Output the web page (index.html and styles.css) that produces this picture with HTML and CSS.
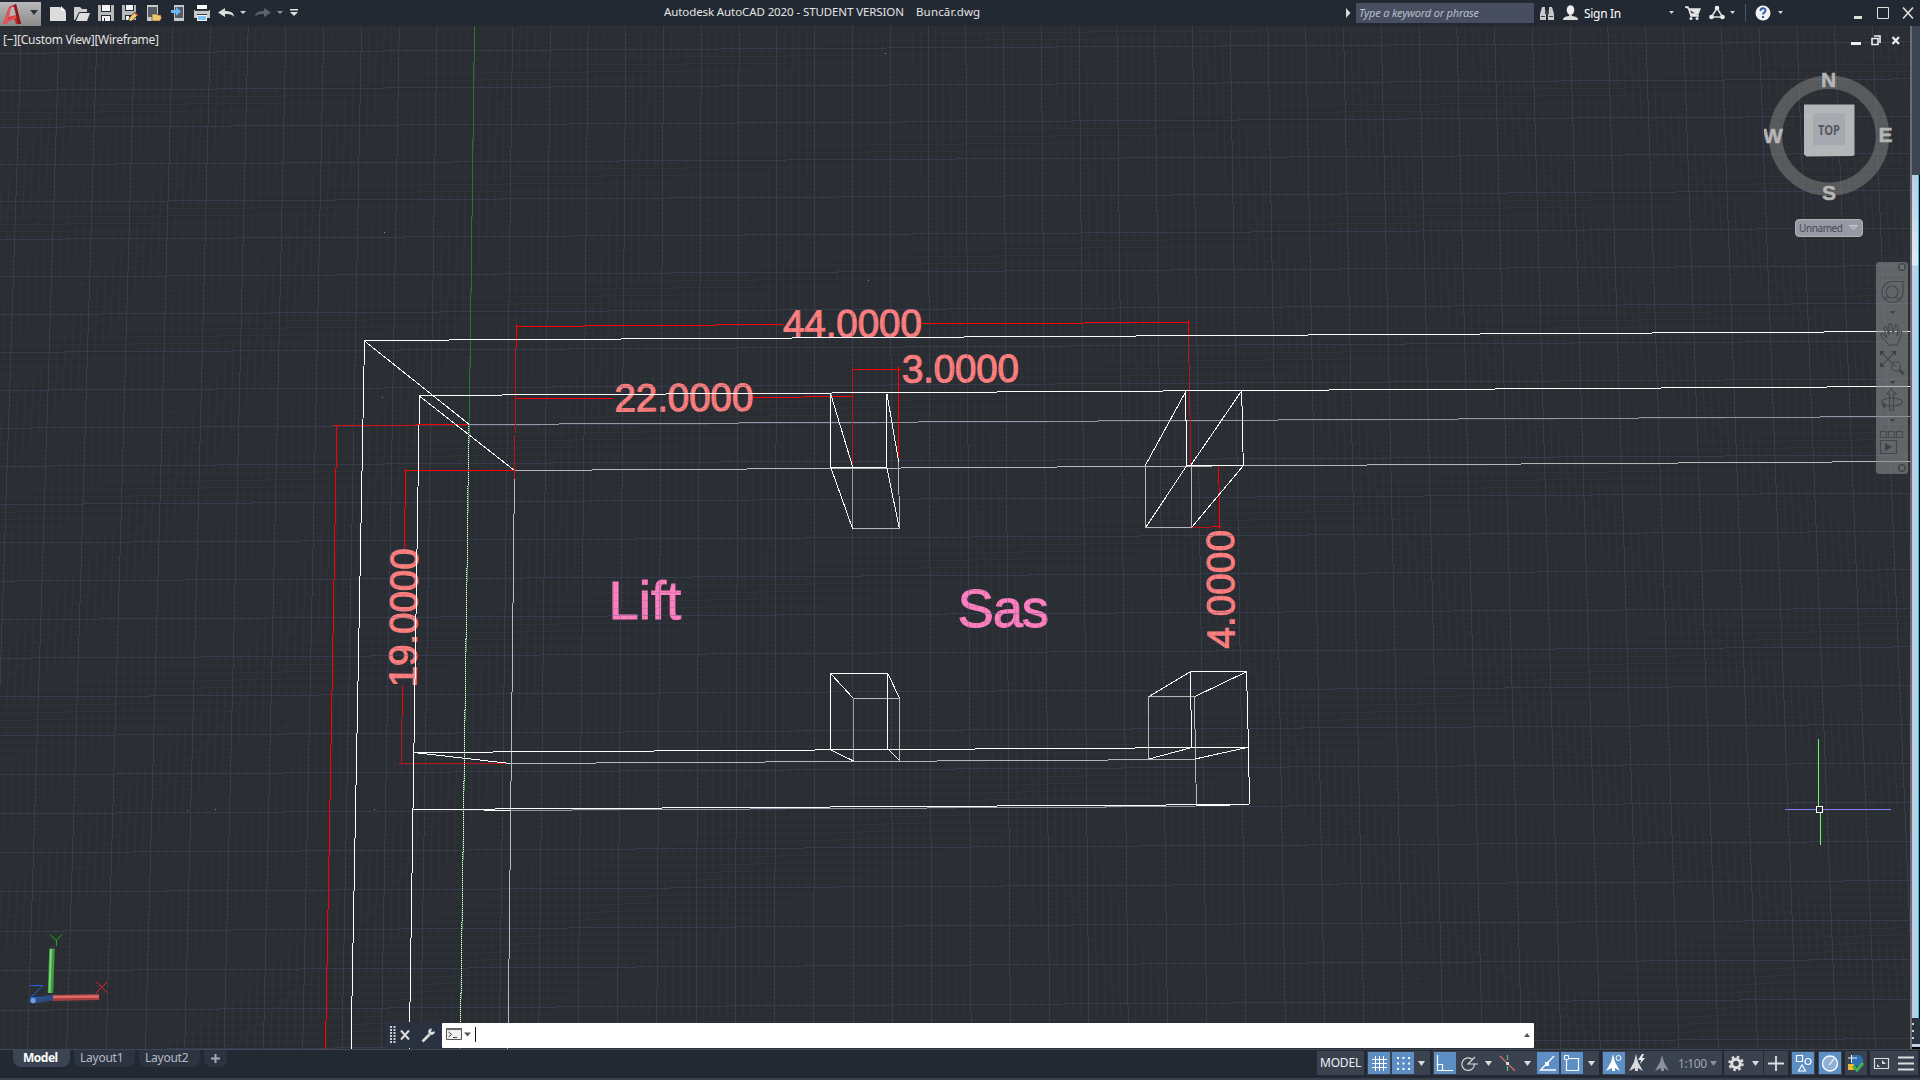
FILE: index.html
```
<!DOCTYPE html>
<html lang="en">
<head>
<meta charset="utf-8">
<title>Autodesk AutoCAD 2020</title>
<link rel="stylesheet" href="styles.css">
</head>
<body>
<header class="titlebar">
  <button class="app-button">
    <svg width="41" height="24" viewBox="0 0 41 24"><path d="M3 22 9 5l7-3 5 20h-5l-2-6-6 1-1 5z" fill="#c4272d"/><path d="M3 22 9 5l2 1-4 16z" fill="#e4565a"/><path d="M11 5l3 0 2 8-7 2z" fill="#b8b4b4"/><path d="M8 17l8-4 1 3-10 4z" fill="#e6484c"/><path d="M14 3l2-1 5 20h-3z" fill="#8e171c"/><path d="M30 8h8l-4 5z" fill="#2d3442"/></svg>
  </button>
  <nav class="quick">
    <svg width="16" height="16"><path d="M0 2h10l6 5v9H0z" fill="#dcdcdc"/><path d="M11 1l5 5h-5z" fill="#f6f6f6"/></svg>
    <svg width="16" height="16"><path d="M0 15V2h6l2 2h5v3H5L1 15z" fill="#cfcfcf"/><path d="M5.500 8H16l-3 8H2z" fill="#dedede"/></svg>
    <svg width="16" height="16"><path d="M0 0h16v16H0z" fill="#b9b9b9"/><path d="M3 0h10v7H3z" fill="#222933"/><path d="M4 0h8v6H4z" fill="#f5f5f5"/><path d="M3 10h10v6H3z" fill="#222933"/><path d="M4 11h8v5H4z" fill="#f5f5f5"/><path d="M6 13h1v3H6z" fill="#222933"/></svg>
    <svg width="16" height="16"><path d="M0 0h14v15H0z" fill="#b9b9b9"/><path d="M3 0h9v6H3z" fill="#222933"/><path d="M4 0h7v5H4z" fill="#f5f5f5"/><path d="M3 10h8v5H3z" fill="#222933"/><path d="M4 11h3v4H4z" fill="#f5f5f5"/><path d="M7 16v-3l6-6 3 3-6 6z" fill="#f3c775" stroke="#222933" stroke-width=".7"/><path d="M13 7l3 3-1 1-3-3z" fill="#d64a43"/></svg>
    <svg width="16" height="16"><path d="M1 0h11v16H1z" fill="#c8c8c8"/><path d="M2 2h9v10H2z" fill="#555b64"/><path d="M6 16V9h4l1 1h4v2l1 0-2 4z" fill="#f2c56c" stroke="#3b3424" stroke-width=".5"/></svg>
    <svg width="16" height="16"><path d="M4 0h10v16H4z" fill="#c8c8c8"/><path d="M5 2h8v11H5z" fill="#555b64"/><path d="M1 5h5V2l5 4.500L6 11V8H1z" fill="#67b9f5"/></svg>
    <svg width="16" height="16"><path d="M3 0h10v4H3z" fill="#fff"/><path d="M0 5h16v8H0z" fill="#c9c9c9"/><path d="M1 5h14v1H1zM3 9h10v1H3z" fill="#343a44"/><path d="M3 10h10v6H3z" fill="#f4f4f4"/><path d="M4 11h8v4H4z" fill="#7ec3f2"/></svg>
    <svg width="16" height="16"><path d="M0 7.500 7 3v3c6 0 9 2 9 6-2-3-5-3-9-3v3z" fill="#dcdcdc"/></svg>
    <svg class="near" width="8" height="16"><path d="M0 6h6L3 9z" fill="#d5d5d5"/></svg>
    <svg width="16" height="16"><path d="M16 7.500 9 3v3C3 6 0 8 0 12c2-3 5-3 9-3v3z" fill="#5b626d"/></svg>
    <svg class="near" width="8" height="16"><path d="M0 6h6L3 9z" fill="#8b9099"/></svg>
    <svg class="more" width="10" height="16"><path d="M0 4h8v1.500H0zM0 7h8l-4 4z" fill="#e0e0e0"/></svg>
  </nav>
  <div class="title"><span class="product">Autodesk AutoCAD 2020 - STUDENT VERSION</span><span class="file">Buncăr.dwg</span></div>
  <svg class="expand" width="6" height="10"><path d="M0 0l4.500 5L0 10z" fill="#d8d8d8"/></svg>
  <div class="search">Type a keyword or phrase</div>
  <div class="account">
    <svg width="14" height="16"><path d="M2 2h3v3l1 2v8H0V9zM9 2h3l2 7v6H8V7l1-2z" fill="#c9c9c9"/><path d="M5 6h4v3H5zM1 11h4v1H1zM9 11h4v1H9z" fill="#3b414b"/></svg>
    <svg class="person" width="15" height="16"><ellipse cx="7.500" cy="5" rx="3.800" ry="4.800" fill="#eee"/><path d="M6 9h3v3h-3z" fill="#c9c9c9"/><path d="M0 15c0-3 3-4 7.500-4s7.500 1 7.500 4z" fill="#ddd"/></svg>
    <span class="sign">Sign In</span>
    <svg class="drop" width="6" height="4"><path d="M0 0h5L2.500 3z" fill="#d5d5d5"/></svg>
    <svg class="cart" width="16" height="16"><path d="M0 2h3l3 9h8M4 4h11l-2 5H6z" fill="#e6e6e6" stroke="#e6e6e6" stroke-width="1.300"/><circle cx="6" cy="13.500" r="1.500" fill="#e6e6e6"/><circle cx="12" cy="13.500" r="1.500" fill="#e6e6e6"/></svg>
    <svg class="share" width="16" height="16"><path d="M8 3 2.500 12h11z" fill="none" stroke="#dcdcdc" stroke-width="1.600"/><circle cx="8" cy="3" r="2.300" fill="#eee"/><circle cx="2.500" cy="12" r="2.300" fill="#eee"/><circle cx="13.500" cy="12" r="2.300" fill="#eee"/></svg>
    <svg class="drop2" width="6" height="4"><path d="M0 0h5L2.500 3z" fill="#d5d5d5"/></svg>
    <i class="sep"></i>
    <svg class="help" width="16" height="16"><circle cx="8" cy="8" r="7.500" fill="#f2f2f2"/><path d="M5.500 6c0-3.500 5-3.500 5-.5 0 2-2.500 2-2.500 4" fill="none" stroke="#2d5ba6" stroke-width="1.900"/><path d="M7 11h2v2H7z" fill="#2d5ba6"/></svg>
    <svg class="drop3" width="6" height="4"><path d="M0 0h5L2.500 3z" fill="#d5d5d5"/></svg>
  </div>
  <div class="window-controls">
    <svg width="8" height="14"><path d="M0 10h8v3H0z" fill="#e0ded8"/></svg>
    <svg width="12" height="14"><path d="M.5 1.500h11v11H.5z" fill="none" stroke="#e0ded8"/></svg>
    <svg width="12" height="14"><path d="M1 1.500l10 11M11 1.500l-10 11" stroke="#e0ded8" stroke-width="1.600"/></svg>
  </div>
</header>

<main class="workspace">
  <section class="viewport">
    <svg class="drawing" width="1911" height="1023" viewBox="0 26 1911 1023">
      <g class="dim-text">
        <text x="783" y="337.500" textLength="139" transform="rotate(-.4 782 337)">44.0000</text>
        <text x="902" y="382.500" textLength="117" transform="rotate(-.4 901 382)">3.0000</text>
        <text x="614.500" y="411.500" textLength="139" transform="rotate(-.4 613 411)">22.0000</text>
        <text transform="translate(416 687.500) rotate(-89.300)" textLength="139">19.0000</text>
        <text transform="translate(1234.500 648.500) rotate(-90.400)" textLength="118.500">4.0000</text>
      </g>
      <g class="room-text">
        <text x="608.500" y="618.500">Lift</text>
        <text x="957.500" y="627" textLength="91.500">Sas</text>
      </g>
      <path id="minor" class="grid-minor"/>
      <path id="major" class="grid-major"/>
      <g class="crisp">
        <path class="axis" d="M474.500 26L469.300 424"/>
        <path class="axis lit" d="M469.300 424L460.300 1049"/>
        <path class="axis-dash" d="M468.500 424V486M467.500 486V568M466.500 568V639M465.500 639V710M464.500 710V781M463.500 781V852M462.500 852V922M461.500 922V993M460.500 993V1049"/>
        <path class="far" d="M469 424.500L1911 416.500M852.500 467V529M853.500 698V761M485 810.500L1195 806.500"/>
        <path class="mid" d="M514.500 470.500L1911 461.500M514.500 471L508 1049M852.500 529L899.500 528.500L898.500 460M1145 466L1145.700 527.500H1191.700L1191 465M853.500 698.500H899.500V761M510 763.500L1195 759.500M1148.500 759V696.700H1194.500L1195.500 760L1196.500 805"/>
        <path class="red" d="M516.500 326.500L783 324.500M921 323.800L1188.500 322.500M516.500 324V348M516 398.500H613M753 397.500L852.500 396.500M852.500 369.500H901M898.700 366V460M415 424.500H469M336.800 425L325.500 1049M404 470.500H514.500M405.500 471L404.500 548M402.500 686L402 719M1218.700 466L1219.700 530M1212 526.500H1221M516.500 326.500v3M1188 320V338M1218.500 466.500v14"/>
        <path class="red-mid" d="M333 425.500H415"/>
        <path class="red-dark" d="M516 348L514.500 479M852.500 367V467M1188.500 338L1191 465M402 719L401.300 763M399 763.500H510M1192 527.500L1212 527"/>
        <path class="near-line" d="M1911 331.500L364.500 340.500L351 1049M1911 386.500L419.500 395.500L417.300 530L409.300 1049M364.500 341L469.300 424.500M420 396.500L514.500 470.500"/>
        <path class="near-line" d="M830.500 394V467.500H886.500V394M831 395L852.700 467M887 394L898.700 462M831 468L852.700 529M887 468L899.300 528.500"/>
        <path class="near-line" d="M1185.700 391.500L1186.500 465.500H1243.300L1241.700 391M1185.500 392L1145 466M1241.500 391L1191 465M1186.500 466L1146 527M1243 466L1192 527"/>
        <path class="near-line" d="M830.500 749V673.500H887.500V749M831 674L853.500 698.500M888 674L899.500 698M831 750L853.500 761M888 749L899.500 760.500"/>
        <path class="near-line" d="M1191.500 747.500L1190.500 671.500H1246.500L1248.500 747L1249.500 804.500M1190 672L1149 696.500M1246 672L1195 696.500M1149 759L1190 748M1195 759L1247 747.500"/>
        <path class="near-line" d="M413.700 752.500L1248.500 747.300M414 752.500L510 763.500M412.500 809.500L1249.500 804.500M484 810.500H510M1196 805.500H1230"/>
        <path class="specks" d="M382 397.500h1M384 232.500h1M868 280.500h1M885 53.500h1M374 809.500h1M187 810.500h1M215 809.500h1"/>
        <g class="cursor">
          <path d="M1785 809.500H1891" stroke="#7f7cf2"/>
          <path d="M1818.500 739V806M1820.500 813V845" stroke="#70f764"/>
          <path d="M1816.500 806.500h6v6h-6z" fill="#2a2d31" stroke="#fff"/>
        </g>
      </g>
      <g class="ucs">
        <path d="M50.500 993L52 948.500" stroke="#3c9a41" stroke-width="5.500"/><path d="M49.500 993L51 949" stroke="#7fd47e" stroke-width="2"/>
        <path d="M52 998L99 997" stroke="#a33f3f" stroke-width="6"/><path d="M53 997L99 996.500" stroke="#dd6a68" stroke-width="2.500"/>
        <path d="M32 1001L53 997.500" stroke="#2c4c80" stroke-width="5.500"/><circle cx="33" cy="1000.500" r="2.800" fill="#6c9fe0"/>
        <path d="M50 934.500L56 940.500L62 934.500M56.500 940V946" stroke="#0fae18"/>
        <path d="M96 981.500L107.500 993M107.500 981.500L96 993" stroke="#e82525"/>
        <path d="M30 985.500H43L30.500 997.500H42.500" stroke="#1f5fe0"/>
      </g>
    </svg>
    <div class="view-label">[−][Custom View][Wireframe]</div>
    <div class="view-controls">
      <svg width="10" height="11"><path d="M0 7h10v3H0z" fill="#eee"/></svg>
      <svg width="10" height="11"><path d="M3 1h6v7M1 3.500h6v6H1z" fill="none" stroke="#eee" stroke-width="1.600"/></svg>
      <svg width="10" height="11"><path d="M1.500 2l6.500 7M8 2L1.500 9" stroke="#eee" stroke-width="2.200"/></svg>
    </div>
    <svg class="viewcube" width="130" height="180" viewBox="1764 66 130 180">
      <circle cx="1829" cy="135.700" r="53.500" fill="none" stroke="#858585" stroke-opacity=".5" stroke-width="13.500"/>
      <g class="compass"><text x="1828.500" y="87">N</text><text x="1773" y="142.500">W</text><text x="1885.500" y="142">E</text><text x="1829" y="199.500">S</text></g>
      <path d="M1804 104.500h50.500V155l-2 1-46 .5-2.500-2z" fill="#b5b6b8"/>
      <path d="M1813 113h32v32h-32z" fill="#a6a9af"/>
      <text class="cube-face" x="1829" y="134.500" textLength="22" lengthAdjust="spacingAndGlyphs">TOP</text>
      <rect x="1795.500" y="219.500" width="67" height="17" rx="3.500" fill="#9799a5" stroke="#aeb0b7"/>
      <text class="cube-name" x="1799" y="231.500" textLength="44">Unnamed</text>
      <path d="M1849.500 225.500h8l-4 4z" fill="#a5a7b2" stroke="#c8cad2"/>
    </svg>
    <svg class="navbar" width="34" height="214" viewBox="1875 261 34 214">
      <rect x="1876" y="262" width="32" height="212" rx="3" fill="#888b8c" fill-opacity=".6"/>
      <path d="M1876 277.500h32M1876 319h32M1876 388h32M1876 427h32" stroke="#55585b" stroke-opacity=".35"/>
      <g fill="none" stroke="#43474c" stroke-width="1.100">
        <circle cx="1902" cy="267" r="3.500" fill="#4a4d51"/><path d="M1900 265l4 4M1904 265l-4 4" stroke="#808386"/>
        <path d="M1892 281.500h11v10a10.500 10.500 0 1 1-11-10z"/><circle cx="1892" cy="292" r="6"/><path d="M1884 300l3.500-3.500M1899.500 300l-3-3"/>
        <path d="M1889 345l-8-9c-1-3 2-3 3-1l3 3-3-10c0-2 3-2 3 0l2 7v-10c0-2 3-2 3 0l1 9 2-8c1-2 3-1 3 1l-1 9 2-4c1-2 3-1 3 1l-3 8-2 4z"/>
        <path d="M1881 352l14 14M1895 352l-14 14"/><circle cx="1896" cy="366.500" r="4.500"/><path d="M1899 370l5 4" stroke-width="3"/>
        <ellipse cx="1892" cy="402" rx="10.500" ry="4"/><path d="M1889.500 410v-16h-2.500l4.500-5 4.500 5h-2.500v16z"/>
        <path d="M1880.500 431.500h6v6h-6zM1888.500 431.500h6v6h-6zM1896.500 431.500h6v6h-6zM1880.500 440.500h16v13h-16z"/>
        <circle cx="1902" cy="468" r="3.500" fill="#4a4d51"/><path d="M1900 467h4M1900 469h4" stroke="#808386"/>
      </g>
      <path d="M1889.500 311h6l-3 3zM1889.500 381h6l-3 3zM1889.500 419h6l-3 3zM1880 351h5l-5 5zM1896 351h-5l5 5zM1880 367h5l-5-5zM1885 402v7l-3-4zM1885 443l7 4-7 4z" fill="#3e4246"/>
    </svg>
    <div class="command">
      <div class="command-tools">
        <svg width="6" height="18"><path d="M1 0v18M4.500 0v18" stroke="#d0d0d0" stroke-width="2" stroke-dasharray="2 1"/></svg>
        <svg width="10" height="12"><path d="M1 1.500l8 9M9 1.500l-8 9" stroke="#dcdcdc" stroke-width="2"/></svg>
        <svg width="15" height="16"><path d="M1.500 14.500l7-7" stroke="#dcdcdc" stroke-width="2.600"/><path d="M13 4.500L10.500 5 10 4.500l1-3C7 1.500 6.500 5 8 7s6 1 6-2.500z" fill="#dcdcdc"/></svg>
      </div>
      <div class="command-input">
        <svg width="30" height="18"><path d="M.5 2.500h15v11H.5z" fill="#eee" stroke="#555"/><path d="M1 2h15v2H1z" fill="#666"/><path d="M2.500 6l3 2.500-3 2.500M7 11.500h4" fill="none" stroke="#444"/><path d="M18 6.500h7l-3.500 4z" fill="#555"/><path d="M29.500 1v15" stroke="#111"/></svg>
        <svg width="6" height="4"><path d="M0 4h6L3 0z" fill="#555"/></svg>
      </div>
    </div>
  </section>
  <aside class="edge"><div class="edge-top"></div><div class="edge-glow"></div><div class="edge-grip"><i></i><i></i><i></i></div><div class="edge-end"></div></aside>
</main>

<footer class="bottom">
  <div class="tabs">
    <div class="tab active">Model</div><div class="tab">Layout1</div><div class="tab second">Layout2</div><div class="tab add"><svg width="9" height="9"><path d="M4.500 0v9M0 4.500h9" stroke="#a6abb3" stroke-width="2"/></svg></div>
  </div>
  <div class="status">
    <div class="group g-model">MODEL</div>
    <div class="group g-grid">
      <svg class="on" width="22" height="22"><path d="M7.500 4v15M11.500 4v15M15.500 4v15M4 7.500h15M4 11.500h15M4 15.500h15" stroke="#fff"/></svg>
      <svg class="on" width="22" height="22"><path d="M5 6h13M5 11.500h13M5 17h13" stroke="#fff" stroke-width="2" stroke-dasharray="2 3.500"/></svg>
      <svg width="14" height="22"><path d="M2 9h7l-3.500 5z" fill="#dcdcdc"/></svg>
    </div>
    <div class="group g-ortho">
      <svg class="on" width="22" height="22"><path d="M3.500 3v15.500H19M3.500 12.500h5v6" fill="none" stroke="#fff" stroke-width="1.200"/></svg>
      <svg width="27" height="22"><path d="M16.500 7.500a6.300 6.300 0 1 0 2 4.500H12l7-7" fill="none" stroke="#d6d6d6" stroke-width="1.200"/><path d="M18 12h4" stroke="#d6d6d6"/></svg>
      <svg width="16" height="22"><path d="M2 9h7l-3.500 5z" fill="#dcdcdc"/></svg>
      <svg width="23" height="22"><path d="M1 4l15 15" stroke="#d86a70" stroke-width="1.200"/><path d="M8.500 3v5M8.500 14v5" stroke="#54c774" stroke-width="1.200"/><path d="M7 10h3v3H7z" fill="#ddd"/></svg>
      <svg width="15" height="22"><path d="M2 9h7l-3.500 5z" fill="#dcdcdc"/></svg>
      <svg class="on" width="22" height="22"><path d="M17 4L3.500 18H19" fill="none" stroke="#fff" stroke-width="1.300"/><path d="M8 10h4v4H8z" fill="#fff"/></svg>
      <svg class="on" width="22" height="22"><path d="M7 6.500h10.500v12h-12V8" fill="none" stroke="#fff" stroke-width="1.200"/><path d="M3.500 3.500h4v4h-4z" fill="#5e8fc4" stroke="#fff"/></svg>
      <svg width="16" height="22"><path d="M5 9h7l-3.500 5z" fill="#dcdcdc"/></svg>
    </div>
    <div class="group g-scale">
      <svg class="on" width="22" height="22"><path d="M10 2l2 8 5 9-5-3v3H9v-3l-6 3 5-9z" fill="#fff"/><circle cx="15.500" cy="6" r="2.500" fill="none" stroke="#fff"/></svg>
      <svg width="26" height="22"><path d="M11 2l2 8 5 9-5-3v3h-3v-3l-6 3 5-9z" fill="#d9d9d9"/><path d="M17 2l-4 6h3l-1 4 5-6h-3l2-4z" fill="#eee"/></svg>
      <svg width="26" height="22"><path d="M11 3l2 7 5 9-5-3v3H10v-3l-6 3 5-9z" fill="#8b919a"/></svg>
      <span class="scale">1:100</span>
      <svg width="12" height="22"><path d="M1 9h7l-3.500 5z" fill="#8b919a"/></svg>
    </div>
    <div class="group g-gear">
      <svg width="24" height="22"><circle cx="12" cy="11.500" r="4.300" fill="none" stroke="#ddd" stroke-width="3"/><circle cx="12" cy="11.500" r="6.500" fill="none" stroke="#ddd" stroke-width="2.500" stroke-dasharray="2.550 2.550"/></svg>
      <svg width="14" height="22"><path d="M4 9h7l-3.500 5z" fill="#dcdcdc"/></svg>
    </div>
    <div class="group g-plus"><svg width="24" height="22"><path d="M12 4v15M4 11.500h16" stroke="#e0e0e0" stroke-width="1.800"/></svg></div>
    <div class="group g-iso"><svg class="on" width="22" height="22"><path d="M4.500 3.500h6v6h-6zM6.500 19l3.500-6 3.500 6z" fill="none" stroke="#fff" stroke-width="1.200"/><circle cx="16" cy="9.500" r="3" fill="none" stroke="#fff" stroke-width="1.200"/></svg></div>
    <div class="group g-hw"><svg class="on" width="22" height="22"><circle cx="11" cy="11.500" r="7.500" fill="#8fb0d4" stroke="#fff" stroke-width="1.300"/><path d="M10 13l5-6" stroke="#fff" stroke-width="1.100"/></svg></div>
    <div class="group g-mon"><svg width="22" height="22"><path d="M7 3h8l3 4v7H7z" fill="#2e6fb4"/><path d="M3 6h9M6.500 3v8" stroke="#eee"/><path d="M3 12h6v6H3z" fill="#f2b72e"/><path d="M8 14l4 4 6-7" fill="none" stroke="#43b14d" stroke-width="3"/></svg></div>
    <div class="group g-end">
      <svg width="24" height="22"><path d="M4.500 6.500h14v10h-14z" fill="none" stroke="#ddd" stroke-width="1.200"/><path d="M12 12v-4l4 4zM7 15v-3l3 3z" fill="#ddd"/></svg>
      <svg width="24" height="22"><path d="M4 5.500h16M4 11.500h16M4 17.500h16" stroke="#ddd" stroke-width="1.800"/></svg>
    </div>
  </div>
</footer>
<script src="grid.js"></script>
</body>
</html>
```
FILE: grid.js
```
// Perspective floor grid: five minor cells per major cell.
let minor = '', major = '';
const xTop = i => 474.7 + 37.78 * i, xBottom = i => 460 + 39.32 * i;
for (let n = -70; n <= 205; n++) {
  const i = n / 5;
  const slope = (xBottom(i) - xTop(i)) / 1012;
  const seg = `M${(xTop(i) - slope * 9).toFixed(1)} 26L${(xBottom(i) + slope * 2).toFixed(1)} 1049`;
  if (n % 5 === 0) major += seg; else minor += seg;
}
for (let n = -5; n <= 140; n++) {
  const j = n / 5;
  const y = 51.3 + 36.97 * j + 0.0525 * j * j;
  const seg = `M0 ${(y + 1.97).toFixed(1)}L1911 ${(y - 9.4).toFixed(1)}`;
  if (n % 5 === 0) major += seg; else minor += seg;
}
document.getElementById('minor').setAttribute('d', minor);
document.getElementById('major').setAttribute('d', major);
```
FILE: styles.css
```
* { box-sizing: border-box; }
body { margin: 0; width: 1920px; height: 1080px; overflow: hidden; display: flex; flex-direction: column; background: #222933; color: #e4e4e4; font: 12px "Noto Sans", "Open Sans", sans-serif; }
svg { display: block; flex: none; }

.titlebar { height: 26px; flex: none; display: flex; align-items: center; background: #222933; }
.app-button { width: 41px; height: 24px; margin-top: 2px; padding: 0; border: 0; background: linear-gradient(#b9b9b9, #8a8a8a); }
.quick { display: flex; gap: 8px; margin-left: 9px; width: 260px; }
.quick .near { margin: 0 -1px 0 -2px; }
.quick .more { margin-left: -2px; }
.title { display: flex; margin-left: 354px; width: 682px; white-space: pre; font-size: 11.5px; line-height: 24px; height: 26px; }
.product { width: 252px; letter-spacing: -.1px; }
.file { letter-spacing: .15px; }
.expand { width: 6px; margin-right: 4px; }
.search { width: 178px; height: 20px; background: #464e60; color: #b9bec8; font: italic 11px/20px "Noto Sans", sans-serif; padding-left: 3px; letter-spacing: -.18px; }
.account { display: flex; align-items: center; margin-left: 6px; width: 314px; }
.person { margin-left: 9px; }
.sign { margin-left: 6px; width: 85px; font-size: 12px; letter-spacing: -.3px; color: #fff; }
.cart { margin-left: 10px; }
.share { margin-left: 8px; }
.drop2 { margin-left: 5px; }
.sep { width: 1px; height: 18px; margin-left: 9px; background: #4b5464; }
.help { margin-left: 9px; }
.drop3 { margin-left: 7px; }
.window-controls { display: flex; gap: 15px; }
.window-controls svg:last-child { margin-left: -2px; }

.workspace { height: 1023px; flex: none; display: flex; }
.viewport { position: relative; width: 1910px; overflow: hidden; background: #2a2d31; }
.drawing text { font-family: "Liberation Sans", Arial, sans-serif; }
.dim-text { font-size: 38.8px; fill: #ff7f7f; stroke: #ff7f7f; stroke-width: 1; }
.room-text { font-size: 54.5px; fill: #ff7fbf; stroke: #ff7fbf; stroke-width: 1; }
.grid-minor, .grid-major { fill: none; shape-rendering: crispEdges; }
.grid-minor { stroke: rgba(70, 75, 110, .17); }
.grid-major { stroke: rgba(80, 85, 130, .36); }
.crisp { shape-rendering: crispEdges; fill: none; }
.axis { stroke: #23762a; }
.axis.lit { stroke: #3f8a43; }
.axis-dash { stroke: #fff; stroke-dasharray: 1 1; }
.far { stroke: #9698a2; }
.mid { stroke: #b6b7ba; }
.near-line { stroke: #fff; }
.red { stroke: #ff0000; }
.red-mid { stroke: #d80f12; }
.red-dark { stroke: #bb1519; }
.specks { stroke: #d0666c; }
.ucs { fill: none; }
.view-label { position: absolute; left: 3px; top: 6px; font-size: 12px; line-height: 16px; letter-spacing: -.26px; color: #e2e2e2; }
.view-controls { position: absolute; right: 9px; top: 9px; display: flex; gap: 10px; }
.viewcube { position: absolute; left: 1764px; top: 40px; }
.viewcube text { text-anchor: middle; font-family: "Liberation Sans", Arial, sans-serif; }
.compass { font-size: 21px; font-weight: bold; fill: #b4b5b6; stroke: #b4b5b6; stroke-width: .5; }
.viewcube .cube-face { font: bold 14px "Noto Sans", sans-serif; fill: #565a62; }
.viewcube .cube-name { text-anchor: start; font: 10px "Noto Sans", sans-serif; fill: #464953; }
.navbar { position: absolute; left: 1875px; top: 235px; }
.command { position: absolute; left: 386px; bottom: 1px; width: 1148px; height: 26px; display: flex; align-items: center; }
.command-tools { width: 56px; height: 26px; display: flex; align-items: center; padding-left: 4px; gap: 4px; background: #2a3140; }
.command-tools svg:last-child { margin-left: 7px; }
.command-input { flex: 1; height: 25px; background: #fff; display: flex; align-items: center; justify-content: space-between; padding: 0 4px; border-radius: 1px; }
.edge { width: 10px; border-left: 2px solid #6e6e6e; display: flex; flex-direction: column; }
.edge-top { height: 149px; background: #3d4554; }
.edge-glow { height: 843px; border-right: 1px solid #000; box-shadow: inset -1px 0 #28bfe0; background: linear-gradient(#b6cdea 0, #dfe9f7 90px, #b9d0ec 91px, #b9d0ec 100%); }
.edge-grip { height: 26px; background: #2b3240; display: flex; flex-direction: column; align-items: flex-start; justify-content: space-evenly; }
.edge-grip i { width: 2px; height: 2px; background: #d0d0d0; }
.edge-end { height: 5px; background: #b9d0ec; border-bottom: 2px solid #000; }

.bottom { height: 31px; flex: none; display: flex; justify-content: space-between; border-top: 1px solid #3f4856; border-bottom: 2px solid #3a4250; }
.tabs { display: flex; padding-left: 13px; height: 17px; line-height: 16px; letter-spacing: -.25px; color: #b7bcc4; }
.tab { width: 61px; padding-left: 6px; background: #2c3441; border-radius: 0 0 8px 8px; margin-right: 4px; }
.tab.active { width: 57px; padding-left: 10px; font-weight: bold; color: #fff; background: #3b4453; letter-spacing: -.5px; }
.tab.second { width: 61px; }
.tab.add { width: 23px; padding: 4px 0 0 7px; margin-left: 0; }
.status { display: flex; width: 603px; padding-top: 1px; }
.group { height: 24px; display: flex; align-items: center; background: #3a4250; }
.on { background: #5e8fc4; }
.g-model { width: 47px; margin-right: 3px; justify-content: center; font-size: 12px; line-height: 22px; letter-spacing: -.2px; color: #f0f0f0; }
.g-grid { width: 63px; padding-left: 1px; gap: 2px; margin-right: 3px; }
.g-ortho { width: 166px; padding-left: 1px; margin-right: 3px; }
.g-ortho .on + .on { margin-left: 2px; }
.g-scale { width: 120px; padding-left: 1px; margin-right: 2px; }
.scale { width: 31px; margin-left: 1px; font-size: 12px; letter-spacing: -.4px; color: #a1a6ae; }
.g-gear { width: 39px; margin-right: 1px; }
.g-plus { width: 24px; margin-right: 3px; }
.g-iso, .g-hw { width: 24px; padding-left: 1px; margin-right: 3px; }
.g-mon { width: 22px; margin-right: 3px; }
.g-end { width: 48px; }
```
